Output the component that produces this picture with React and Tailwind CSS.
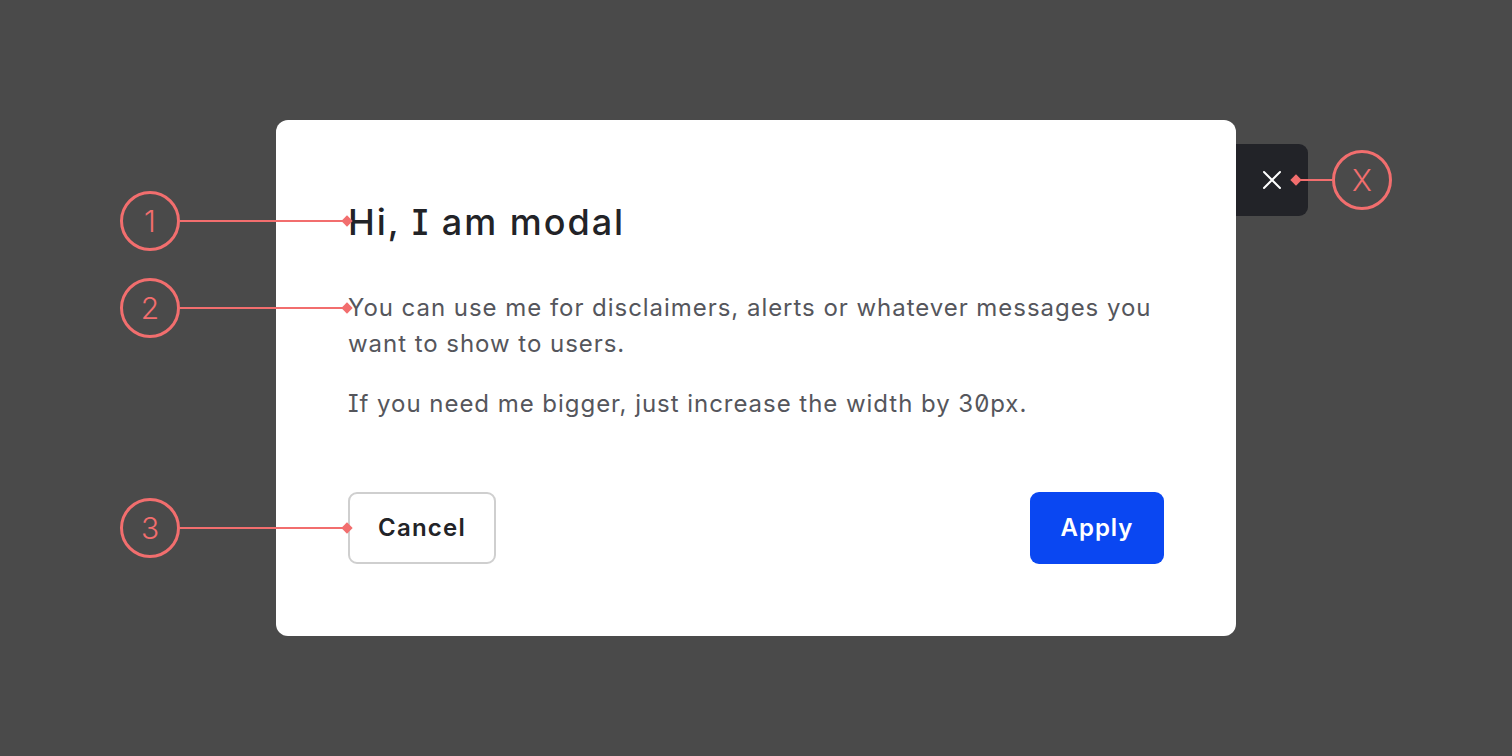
import React from "react";

function Circle({ label }) {
  return (
    <div className="w-[60px] h-[60px] shrink-0 rounded-full border-[3px] border-[#f26e6e] flex items-center justify-center text-[#f26e6e] text-[30px] font-light leading-none">
      {label}
    </div>
  );
}

function Diamond() {
  return <div className="w-[8px] h-[8px] shrink-0 rotate-45 bg-[#f26e6e]" />;
}

function LeftNote({ label, top }) {
  return (
    <div className="absolute left-[-156px] flex items-center" style={{ top }}>
      <Circle label={label} />
      <div className="w-[163px] h-[2px] bg-[#f26e6e]" />
      <Diamond />
    </div>
  );
}

export default function App() {
  return (
    <div
      className="w-[1512px] h-[756px] bg-[#4a4a4a] flex items-center justify-center"
      style={{ fontFamily: "Inter, 'Noto Sans', sans-serif" }}
    >
      <div className="relative w-[960px] bg-white rounded-[12px] px-[72px] pt-[79px] pb-[72px] [font-feature-settings:'cv08','zero']">
        <h1 className="text-[36px] leading-[46px] font-medium tracking-[0.055em] text-[#222327]">Hi, I am modal</h1>
        <p className="mt-[45px] text-[24px] leading-[36px] tracking-[0.04em] text-[#55565c]">
          You can use me for disclaimers, alerts or whatever messages you want to show to users.
        </p>
        <p className="mt-[24px] text-[24px] leading-[36px] tracking-[0.04em] text-[#55565c]">
          If you need me bigger, just increase the width by 30px.
        </p>
        <div className="mt-[70px] flex items-center justify-between">
          <button className="h-[72px] w-[148px] rounded-[9px] border-2 border-[#cfcfcf] bg-white text-[24px] font-semibold tracking-[0.05em] text-[#222327]">
            Cancel
          </button>
          <button className="h-[72px] w-[134px] rounded-[9px] bg-[#0a47f2] text-[24px] font-semibold tracking-[0.04em] text-white">
            Apply
          </button>
        </div>

        <div className="absolute left-full top-[24px] w-[72px] h-[72px] bg-[#222328] rounded-r-[9px] flex items-center justify-center">
          <svg width="20" height="20" viewBox="0 0 20 20" fill="none" stroke="white" strokeWidth="2" strokeLinecap="round">
            <path d="M2 2 L18 18 M18 2 L2 18" />
          </svg>
        </div>
        <div className="absolute left-[1016px] top-[30px] flex items-center">
          <Diamond />
          <div className="w-[32px] h-[2px] bg-[#f26e6e]" />
          <Circle label="X" />
        </div>

        <LeftNote label="1" top={71} />
        <LeftNote label="2" top={158} />
        <LeftNote label="3" top={378} />
      </div>
    </div>
  );
}
